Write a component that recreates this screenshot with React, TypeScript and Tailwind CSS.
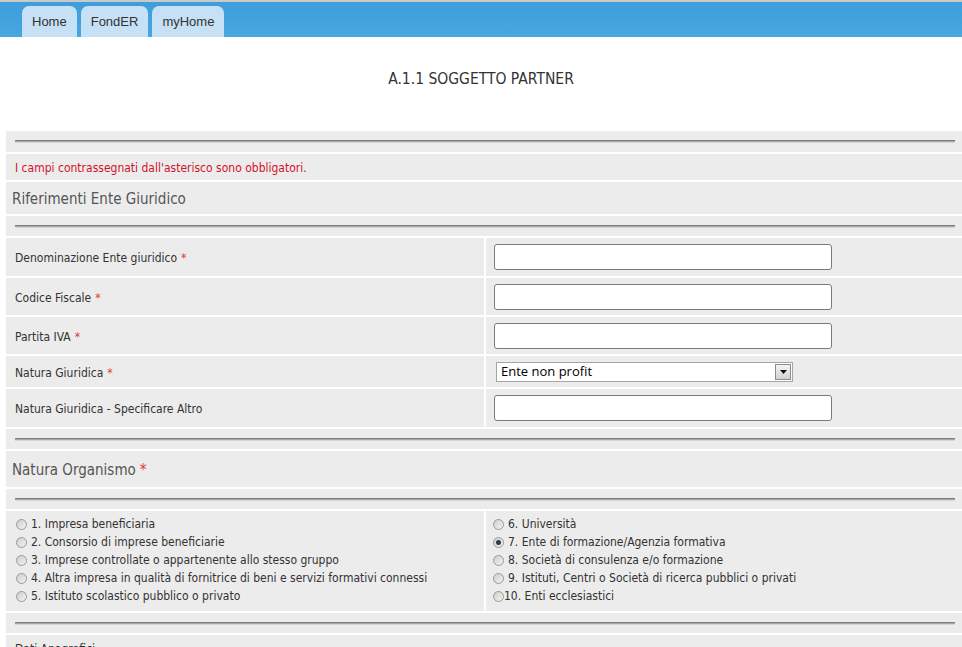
import React from 'react';

const tabs = ['Home', 'FondER', 'myHome'];

const leftOptions = [
  '1. Impresa beneficiaria',
  '2. Consorsio di imprese beneficiarie',
  '3. Imprese controllate o appartenente allo stesso gruppo',
  '4. Altra impresa in qualità di fornitrice di beni e servizi formativi connessi',
  '5. Istituto scolastico pubblico o privato',
];

const rightOptions = [
  '6. Università',
  '7. Ente di formazione/Agenzia formativa',
  '8. Società di consulenza e/o formazione',
  '9. Istituti, Centri o Società di ricerca pubblici o privati',
  '10. Enti ecclesiastici',
];

function Rule() {
  return (
    <div className="h-[20px] bg-[#ececec] flex items-center px-[9px]">
      <div className="w-full h-[3px] border-t border-[#7d7d7d] bg-[#a8a8a8] border-b-[#d6d6d6] border-b" />
    </div>
  );
}

function Star() {
  return <span className="text-[#e23a3a] ml-[4px]">*</span>;
}

function TextInput() {
  return <div className="w-[338px] h-[26px] bg-white border border-[#7a7a7a] rounded-[3px]" />;
}

function Radio({ checked }: { checked?: boolean }) {
  return (
    <span className="w-[11px] h-[11px] rounded-full border border-[#999] bg-gradient-to-br from-[#cfcfcf] to-[#f2f2f2] flex items-center justify-center shrink-0">
      {checked && <span className="w-[5px] h-[5px] rounded-full bg-[#2d3b4d]" />}
    </span>
  );
}

function FieldRow({ label, required, h, children }: { label: string; required?: boolean; h: string; children: React.ReactNode }) {
  return (
    <div className={`flex gap-[2px] ${h}`}>
      <div className="w-[478px] bg-[#ececec] flex items-center pl-[9px] pt-[2px] text-[12px] text-[#333]">
        {label}
        {required && <Star />}
      </div>
      <div className="flex-1 bg-[#ececec] flex items-center pl-[8px]">{children}</div>
    </div>
  );
}

export default function App() {
  return (
    <div className="h-[647px] w-[962px] overflow-hidden bg-white font-['DejaVu_Sans_Condensed','DejaVu_Sans',sans-serif]">
      {/* Top bar */}
      <div className="h-[2px] bg-[#c9c9c9]" />
      <div className="h-[35px] bg-gradient-to-b from-[#3d9edb] to-[#47a7e0] flex items-end pl-[22px] gap-[4px]">
        {tabs.map(t => (
          <div
            key={t}
            className="h-[31px] px-[10px] rounded-t-[7px] bg-[#c6e1f5] flex items-center text-[13px] text-[#333] font-['Liberation_Sans',Arial,sans-serif]"
          >
            {t}
          </div>
        ))}
      </div>

      {/* Title */}
      <div className="h-[94px] flex items-center justify-center pb-[8px] text-[15.5px] text-[#333]">
        A.1.1 SOGGETTO PARTNER
      </div>

      {/* Form panel */}
      <div className="ml-[6px] w-[958px] flex flex-col gap-[2px]">
        <div className="h-[21px] bg-[#ececec] flex items-center px-[9px]">
          <div className="w-full h-[3px] border-t border-[#7d7d7d] bg-[#a8a8a8] border-b-[#d6d6d6] border-b" />
        </div>
        <div className="h-[26px] bg-[#ececec] flex items-center pl-[9px] pt-[1px] text-[12px] text-[#d4112b]">
          I campi contrassegnati dall&apos;asterisco sono obbligatori.
        </div>
        <div className="h-[32px] bg-[#ececec] flex items-center pl-[6px] pt-[2px] text-[15px] text-[#555]">
          Riferimenti Ente Giuridico
        </div>
        <Rule />

        <FieldRow label="Denominazione Ente giuridico" required h="h-[38px]">
          <TextInput />
        </FieldRow>
        <FieldRow label="Codice Fiscale" required h="h-[37px]">
          <TextInput />
        </FieldRow>
        <FieldRow label="Partita IVA" required h="h-[37px]">
          <TextInput />
        </FieldRow>
        <FieldRow label="Natura Giuridica" required h="h-[31px]">
          <div className="ml-[2px] w-[297px] h-[20px] bg-white border border-[#a5a5a5] flex items-center justify-between pl-[4px] pr-[1px]">
            <span className="text-[13px] text-black font-['Open_Sans',sans-serif]">Ente non profit</span>
            <span className="w-[16px] h-[16px] border border-[#8c8c8c] bg-gradient-to-b from-[#f4f4f4] to-[#d2d2d2] flex items-center justify-center">
              <svg width="7" height="4" viewBox="0 0 7 4">
                <path d="M0 0h7L3.5 4z" fill="#111" />
              </svg>
            </span>
          </div>
        </FieldRow>
        <FieldRow label="Natura Giuridica - Specificare Altro" h="h-[38px]">
          <TextInput />
        </FieldRow>

        <Rule />
        <div className="h-[36px] bg-[#ececec] flex items-center pl-[6px] pt-[2px] text-[15px] text-[#555]">
          Natura Organismo
          <Star />
        </div>
        <Rule />

        <div className="flex gap-[2px]">
          <div className="w-[478px] bg-[#ececec] pt-[4px] pb-[6px] pl-[10px] flex flex-col">
            {leftOptions.map(o => (
              <div key={o} className="h-[18px] flex items-center gap-[4px] text-[12px] text-[#333]">
                <Radio />
                <span>{o}</span>
              </div>
            ))}
          </div>
          <div className="flex-1 bg-[#ececec] pt-[4px] pb-[6px] pl-[7px] flex flex-col">
            {rightOptions.map((o, i) => (
              <div key={o} className={`h-[18px] flex items-center text-[12px] text-[#333] ${i === 4 ? 'gap-0' : 'gap-[4px]'}`}>
                <Radio checked={i === 1} />
                <span>{o}</span>
              </div>
            ))}
          </div>
        </div>

        <Rule />
        <div className="h-[40px] bg-[#ececec] pl-[9px] pt-[5px] text-[12px] text-[#333]">Dati Anagrafici</div>
      </div>
    </div>
  );
}
